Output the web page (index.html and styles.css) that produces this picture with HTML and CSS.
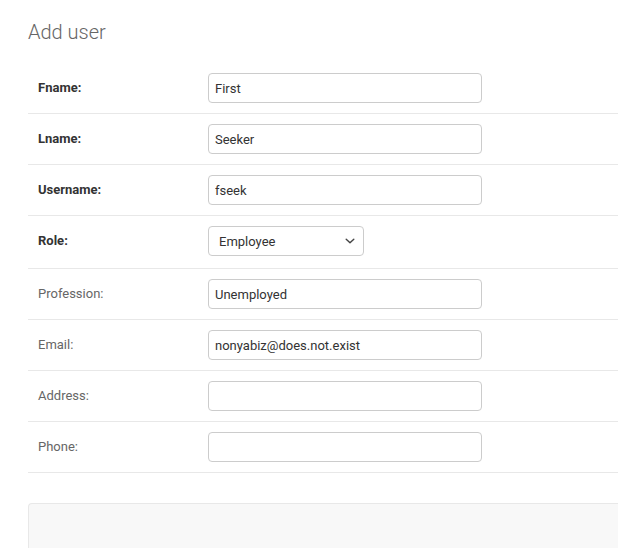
FILE: index.html
```html
<!DOCTYPE html>
<html lang="en">
<head>
<meta charset="utf-8">
<title>Add user</title>
<link rel="stylesheet" href="styles.css">
</head>
<body>
<div class="content">
  <h1 class="title">Add user</h1>
  <form class="form">
    <fieldset class="fieldset">
      <div class="form-row">
        <label class="label required" for="id_fname">Fname:</label>
        <input class="text-input" id="id_fname" type="text" value="First">
      </div>
      <div class="form-row">
        <label class="label required" for="id_lname">Lname:</label>
        <input class="text-input" id="id_lname" type="text" value="Seeker">
      </div>
      <div class="form-row">
        <label class="label required" for="id_username">Username:</label>
        <input class="text-input" id="id_username" type="text" value="fseek">
      </div>
      <div class="form-row form-row-select">
        <label class="label required" for="id_role">Role:</label>
        <span class="select-wrap">
          <select class="select" id="id_role">
            <option selected>Employee</option>
            <option>Employer</option>
          </select>
          <svg class="select-arrow" width="10" height="6" viewBox="0 0 10 6" aria-hidden="true">
            <path d="M1.2 1.2 L5 4.8 L8.8 1.2" fill="none" stroke="#444" stroke-width="1.4" stroke-linecap="round" stroke-linejoin="round"/>
          </svg>
        </span>
      </div>
      <div class="form-row">
        <label class="label" for="id_profession">Profession:</label>
        <input class="text-input" id="id_profession" type="text" value="Unemployed">
      </div>
      <div class="form-row">
        <label class="label" for="id_email">Email:</label>
        <input class="text-input" id="id_email" type="text" value="nonyabiz@does.not.exist">
      </div>
      <div class="form-row">
        <label class="label" for="id_address">Address:</label>
        <input class="text-input" id="id_address" type="text" value="">
      </div>
      <div class="form-row">
        <label class="label" for="id_phone">Phone:</label>
        <input class="text-input" id="id_phone" type="text" value="">
      </div>
    </fieldset>
    <div class="submit-row"></div>
  </form>
</div>
</body>
</html>
```
FILE: styles.css
```css
html, body {
  margin: 0;
  padding: 0;
  background: #fff;
}
body {
  font-family: Roboto, "Liberation Sans", sans-serif;
  color: #333;
  font-size: 14px;
  overflow: hidden;
}
.content {
  padding: 20px 0 0 28px;
}
.title {
  margin: 0 0 19px;
  font-size: 20px;
  font-weight: 300;
  color: #666;
  line-height: 24px;
}
.form {
  margin: 0;
}
.fieldset {
  margin: 0;
  padding: 0;
  border: none;
  min-width: 0;
}
.form-row {
  display: flex;
  align-items: flex-start;
  padding: 10px;
  border-bottom: 1px solid #e8e8e8;
}
.form-row-select {
  padding-bottom: 12px;
}
.label {
  box-sizing: border-box;
  width: 170px;
  flex: none;
  padding: 7px 10px 0 0;
  font-size: 13px;
  line-height: 16px;
  color: #666;
}
.label.required {
  font-weight: 700;
  color: #333;
}
.text-input {
  box-sizing: border-box;
  width: 274px;
  height: 30px;
  margin: 0;
  padding: 5px 6px;
  border: 1px solid #ccc;
  border-radius: 4px;
  background: #fff;
  font-family: Roboto, "Liberation Sans", sans-serif;
  font-size: 13px;
  color: #333;
  outline: none;
}
.select-wrap {
  position: relative;
  display: block;
  width: 156px;
  height: 30px;
}
.select {
  box-sizing: border-box;
  display: block;
  width: 156px;
  height: 30px;
  margin: 0;
  padding: 5px 24px 5px 10px;
  border: 1px solid #ccc;
  border-radius: 4px;
  background: #fff;
  font-family: Roboto, "Liberation Sans", sans-serif;
  font-size: 13px;
  color: #333;
  appearance: none;
  -webkit-appearance: none;
  outline: none;
}
.select-arrow {
  position: absolute;
  right: 9px;
  top: 12px;
  pointer-events: none;
}
.submit-row {
  margin-top: 30px;
  height: 80px;
  background: #f8f8f8;
  border: 1px solid #e8e8e8;
  border-right: none;
  border-radius: 4px 0 0 4px;
}
```
